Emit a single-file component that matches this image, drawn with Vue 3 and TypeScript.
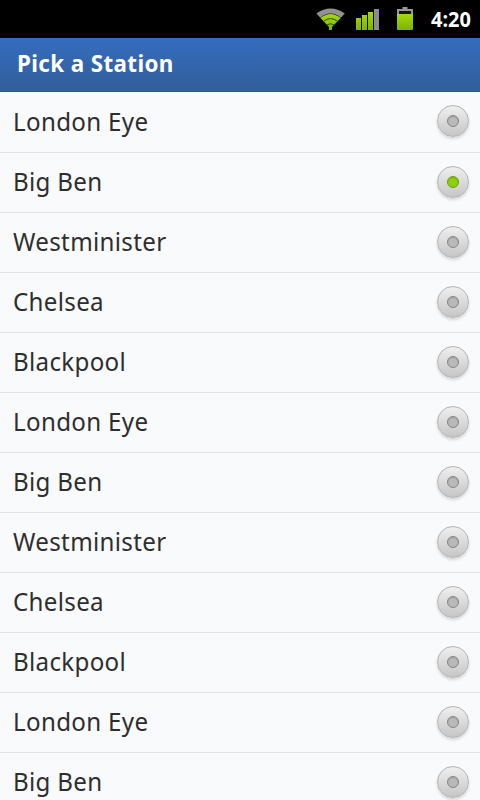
<script setup lang="ts">
import { ref } from 'vue'

interface Station {
  id: number
  name: string
}

const names: string[] = ['London Eye', 'Big Ben', 'Westminister', 'Chelsea', 'Blackpool']
const stations: Station[] = Array.from({ length: 12 }, (_, i) => ({
  id: i,
  name: names[i % names.length],
}))
const selected = ref<number>(1)
</script>

<template>
  <div class="screen">
    <div class="status">
      <svg class="wifi" width="30" height="24" viewBox="0 0 30 24">
        <defs>
          <linearGradient id="green" x1="0" y1="0" x2="0" y2="1">
            <stop offset="0" stop-color="#a4d90e" />
            <stop offset="1" stop-color="#7bb300" />
          </linearGradient>
        </defs>
        <path d="M.4 5.4Q14.5-4.6 28.8 5.4L24.8 9.8Q14.5 1.4 4.4 9.8Z" fill="#929292" />
        <path d="M4.4 10.1Q14.5 1.9 24.8 10.1L16 19V22H13V19Z" fill="url(#green)" />
        <path d="M7.4 13.4Q14.5 7.8 21.6 13.4M10.4 17.2Q14.5 14.2 18.6 17.2" fill="none" stroke="#304800" stroke-width="1" />
      </svg>
      <svg class="signal" width="24" height="22" viewBox="0 0 24 22">
        <path d="M0 9h5v12H0zM6 6h5v15H6zM12 3h5v18h-5z" fill="url(#green)" />
        <path d="M18 0h5v21h-5z" fill="#8c8c8c" />
      </svg>
      <svg class="battery" width="16" height="24" viewBox="0 0 16 24">
        <path d="M5.5 0h5v2H16v5H0V2h5.5z" fill="#999" />
        <path d="M2 4h12v3H2z" fill="#171717" />
        <path d="M0 7h16v15q0 1-1 1H1q-1 0-1-1z" fill="url(#green)" />
      </svg>
      <span class="time">4:20</span>
    </div>
    <header class="header"><h1 class="title">Pick a Station</h1></header>
    <ul class="list">
      <li v-for="s in stations" :key="s.id" class="row" @click="selected = s.id">
        <span class="name">{{ s.name }}</span>
        <span class="radio" :class="{ on: selected === s.id }"><span class="dot"></span></span>
      </li>
    </ul>
  </div>
</template>

<style>
body {
  margin: 0;
  overflow: hidden;
}
</style>

<style scoped>
.screen {
  width: 480px;
  height: 800px;
  overflow: hidden;
  background: #f9fafc;
  font-family: "Noto Sans", "Open Sans", sans-serif;
}
.status {
  display: flex;
  height: 38px;
  background: #000;
}
.wifi {
  margin: 8px 0 0 316px;
}
.signal {
  margin: 9px 0 0 10px;
}
.battery {
  margin: 7px 0 0 17px;
}
.time {
  margin-left: 18px;
  color: #fff;
  font-size: 21px;
  font-weight: 700;
  line-height: 38px;
  transform: scaleX(0.95);
  transform-origin: 0 50%;
}
.header {
  box-sizing: border-box;
  height: 54px;
  padding-left: 17px;
  background: linear-gradient(#346cbd, #325f9b);
  border-bottom: 1px solid #2f5893;
}
.title {
  display: inline-block;
  margin: 0;
  color: #fff;
  font-size: 24px;
  font-weight: 700;
  letter-spacing: 0.4px;
  line-height: 49px;
  white-space: nowrap;
  transform: scaleX(0.933);
  transform-origin: 0 50%;
}
.list {
  margin: 0;
  padding: 0;
  list-style: none;
}
.row {
  box-sizing: border-box;
  display: flex;
  align-items: center;
  justify-content: space-between;
  height: 60px;
  padding: 0 11px 1px 13px;
  border-bottom: 1px solid #e2e3e8;
}
.row:first-child {
  height: 61px;
  padding-bottom: 2px;
}
.name {
  margin-bottom: 2px;
  color: #2e2e2e;
  font-size: 26px;
  letter-spacing: 0.35px;
  line-height: 56px;
  transform: scaleX(0.928);
  transform-origin: 0 50%;
}
.row:first-child .name {
  margin-bottom: 0;
  line-height: 58px;
}
.radio {
  box-sizing: border-box;
  display: flex;
  align-items: center;
  justify-content: center;
  width: 32px;
  height: 32px;
  border: 1px solid #b4b4b4;
  border-radius: 50%;
  background: linear-gradient(#efefef, #c6c6c6);
  box-shadow: 0 2px 3px rgba(0, 0, 0, 0.14);
}
.dot {
  box-sizing: border-box;
  width: 12px;
  height: 12px;
  border: 1px solid #858585;
  border-radius: 50%;
  background: #b9b9b9;
  box-shadow: inset 0 1px 1px rgba(0, 0, 0, 0.15);
}
.on .dot {
  border-color: #6c9f0c;
  background: #8fd00c;
}
</style>
